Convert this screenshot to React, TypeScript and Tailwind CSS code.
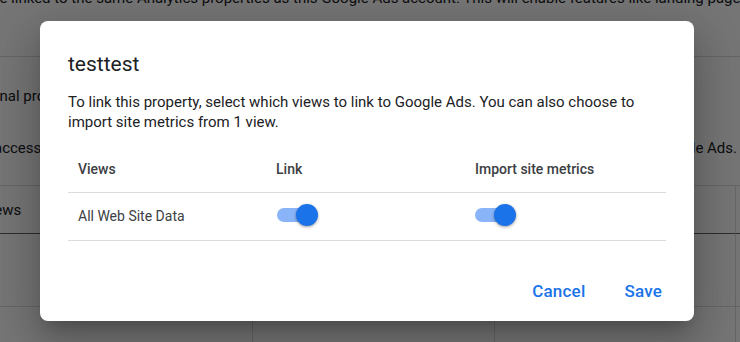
import React from "react";

function Toggle() {
  return (
    <div className="relative h-[20px] w-[36px]">
      <div className="absolute left-0 top-[1px] h-[14px] w-[34px] rounded-full bg-[#8ab4f8]" />
      <div className="absolute left-[19px] top-[-3px] h-[22px] w-[22px] rounded-full bg-[#1a73e8] shadow-[0_1px_3px_rgba(0,0,0,0.4)]" />
    </div>
  );
}

export default function App() {
  return (
    <div
      className="relative h-[342px] w-[740px] overflow-hidden bg-white text-[#202124]"
      style={{ fontFamily: "Roboto, 'Noto Sans', Arial, sans-serif" }}
    >
      {/* background page */}
      <div className="text-[15px] leading-[20px]">
        <div className="-mt-[12px] h-[69px] border-b border-[#dadce0] whitespace-nowrap">
          <div className="-ml-[9px]">
            be linked to the same Analytics properties as this Google Ads account. This will enable features like landing page metrics
          </div>
        </div>
        <div className="border-b border-[#dadce0] pb-[27px] pt-[29px] whitespace-nowrap">
          <div className="-ml-[48px]">Additional properties</div>
          <div className="mt-[32px] flex justify-between">
            <span className="-ml-[6px]">access</span>
            <span className="mr-[3px]">into Google Ads.</span>
          </div>
        </div>
        <div className="grid grid-cols-[253px_242px_241px_1fr]">
          <div className="flex h-[48px] items-center border-b border-r border-b-[#5f6368] border-r-[#dadce0] whitespace-nowrap">
            <span className="-ml-[19px]">Views</span>
          </div>
          <div className="h-[48px] border-b border-r border-b-[#5f6368] border-r-[#dadce0]" />
          <div className="h-[48px] border-b border-r border-b-[#5f6368] border-r-[#dadce0]" />
          <div className="h-[48px] border-b border-b-[#5f6368]" />
          <div className="h-[73px] border-b border-r border-[#dadce0]" />
          <div className="h-[73px] border-b border-r border-[#dadce0]" />
          <div className="h-[73px] border-b border-r border-[#dadce0]" />
          <div className="h-[73px] border-b border-[#dadce0]" />
          <div className="h-[60px] border-r border-[#dadce0]" />
          <div className="h-[60px] border-r border-[#dadce0]" />
          <div className="h-[60px] border-r border-[#dadce0]" />
          <div className="h-[60px]" />
        </div>
      </div>

      {/* scrim */}
      <div className="absolute inset-0 bg-black/[0.54]" />

      {/* dialog */}
      <div className="absolute left-[40px] top-[21px] flex h-[300px] w-[654px] flex-col rounded-[8px] bg-white px-[28px] pt-[29px] shadow-[0_11px_15px_-7px_rgba(0,0,0,0.2),0_24px_38px_3px_rgba(0,0,0,0.14),0_9px_46px_8px_rgba(0,0,0,0.12)]">
        <div className="text-[21px] leading-[28px] text-[#202124]">testtest</div>
        <p className="mt-[14px] text-[15px] leading-[20px] text-[#202124]">
          To link this property, select which views to link to Google Ads. You can also choose to import site metrics from 1 view.
        </p>
        <div className="mt-[14px] text-[14px] text-[#3c4043]">
          <div className="grid h-[47px] grid-cols-[198px_199px_1fr] items-center border-b border-[#dadce0] pl-[10px] font-medium">
            <div>Views</div>
            <div>Link</div>
            <div>Import site metrics</div>
          </div>
          <div className="grid h-[48px] grid-cols-[198px_199px_1fr] items-center border-b border-[#dadce0] pl-[10px]">
            <div>All Web Site Data</div>
            <div className="pl-[1px]">
              <Toggle />
            </div>
            <div>
              <Toggle />
            </div>
          </div>
        </div>
        <div className="-mr-[4px] mt-auto mb-[11px] flex justify-end gap-[23px]">
          <button className="h-[36px] rounded px-[8px] text-[17px] font-medium tracking-[0.2px] text-[#1a73e8]">
            Cancel
          </button>
          <button className="h-[36px] rounded px-[8px] text-[17px] font-medium tracking-[0.2px] text-[#1a73e8]">
            Save
          </button>
        </div>
      </div>
    </div>
  );
}
